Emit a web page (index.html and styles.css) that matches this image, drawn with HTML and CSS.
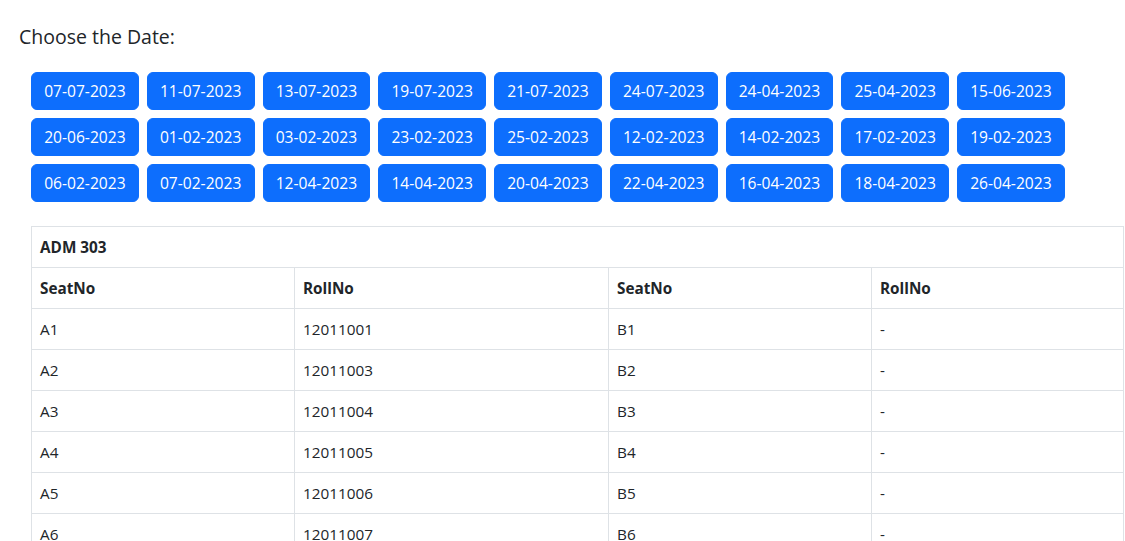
FILE: index.html
```html
<!DOCTYPE html>
<html lang="en">
<head>
<meta charset="utf-8">
<title>Choose the Date</title>
<link rel="stylesheet" href="styles.css">
</head>
<body>
<div class="page">
  <h5 class="title">Choose the Date:</h5>
  <div class="dates">
    <button class="btn">07-07-2023</button>
    <button class="btn">11-07-2023</button>
    <button class="btn">13-07-2023</button>
    <button class="btn">19-07-2023</button>
    <button class="btn">21-07-2023</button>
    <button class="btn">24-07-2023</button>
    <button class="btn">24-04-2023</button>
    <button class="btn">25-04-2023</button>
    <button class="btn">15-06-2023</button>
    <button class="btn">20-06-2023</button>
    <button class="btn">01-02-2023</button>
    <button class="btn">03-02-2023</button>
    <button class="btn">23-02-2023</button>
    <button class="btn">25-02-2023</button>
    <button class="btn">12-02-2023</button>
    <button class="btn">14-02-2023</button>
    <button class="btn">17-02-2023</button>
    <button class="btn">19-02-2023</button>
    <button class="btn">06-02-2023</button>
    <button class="btn">07-02-2023</button>
    <button class="btn">12-04-2023</button>
    <button class="btn">14-04-2023</button>
    <button class="btn">20-04-2023</button>
    <button class="btn">22-04-2023</button>
    <button class="btn">16-04-2023</button>
    <button class="btn">18-04-2023</button>
    <button class="btn">26-04-2023</button>
  </div>
  <table class="seats">
    <colgroup>
      <col class="c1"><col class="c2"><col class="c3"><col class="c4">
    </colgroup>
    <thead>
      <tr><th colspan="4">ADM 303</th></tr>
      <tr><th>SeatNo</th><th>RollNo</th><th>SeatNo</th><th>RollNo</th></tr>
    </thead>
    <tbody>
      <tr><td>A1</td><td>12011001</td><td>B1</td><td>-</td></tr>
      <tr><td>A2</td><td>12011003</td><td>B2</td><td>-</td></tr>
      <tr><td>A3</td><td>12011004</td><td>B3</td><td>-</td></tr>
      <tr><td>A4</td><td>12011005</td><td>B4</td><td>-</td></tr>
      <tr><td>A5</td><td>12011006</td><td>B5</td><td>-</td></tr>
      <tr><td>A6</td><td>12011007</td><td>B6</td><td>-</td></tr>
    </tbody>
  </table>
</div>
</body>
</html>
```

FILE: styles.css
```css
html {
  overflow: hidden;
}
body {
  margin: 0;
  background: #fff;
  color: #212529;
  font-family: "Open Sans", "Noto Sans", sans-serif;
  font-size: 16px;
  line-height: 24px;
}
.page {
  padding: 25px 0 0 19px;
}
.title {
  margin: 0 0 23px 0;
  font-size: 19.5px;
  font-weight: 500;
  line-height: 24px;
}
.dates {
  margin-left: 12px;
  display: grid;
  grid-template-columns: repeat(9, 107.75px);
  column-gap: 8px;
  row-gap: 8px;
}
.btn {
  height: 38px;
  padding: 6px 0;
  border: 1px solid #0d6efd;
  border-radius: 6px;
  background: #0d6efd;
  color: #fff;
  font-family: inherit;
  font-size: 15.6px;
  line-height: 24px;
  text-align: center;
}
.seats {
  margin: 24px 0 0 12px;
  width: 1092px;
  border-collapse: collapse;
  table-layout: fixed;
  font-size: 15.3px;
}
.c1 { width: 263px; }
.c2 { width: 314px; }
.c3 { width: 263px; }
.c4 { width: 252px; }
.seats th,
.seats td {
  border: 1px solid #dee2e6;
  padding: 8px 8px;
  text-align: left;
  height: 24px;
  line-height: 24px;
}
.seats th {
  font-weight: 700;
}
```
